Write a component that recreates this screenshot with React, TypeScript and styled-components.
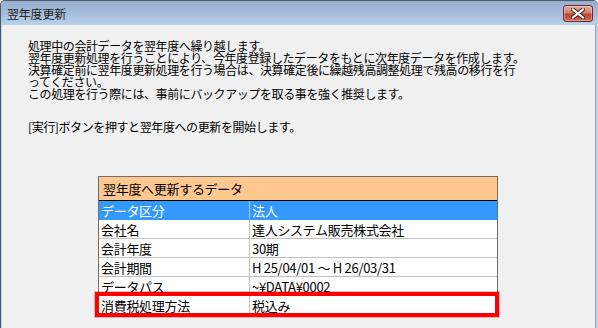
import React from 'react'
import styled, { createGlobalStyle } from 'styled-components'

const GlobalStyle = createGlobalStyle`
  html, body {
    margin: 0;
    padding: 0;
    background: #f0f0f0;
  }
  body {
    font-family: 'Noto Sans CJK JP', 'Noto Sans', sans-serif;
  }
`

const Window = styled.div`
  width: 598px;
  height: 328px;
  display: flex;
  flex-direction: column;
  overflow: hidden;
  border-top: 1px solid #505a66;
  border-left: 1px solid #505a66;
  border-radius: 5px 5px 0 0;
  box-sizing: border-box;
  background: #b9d1ea;
`

const TitleBar = styled.div`
  height: 24px;
  flex: none;
  display: flex;
  align-items: center;
  justify-content: space-between;
  padding: 0 5px 0 6px;
  background: linear-gradient(#95aecd, #a9c1de 60%, #bad1ea);
`

const Title = styled.span`
  font-size: 12px;
  color: #1a1a1a;
  letter-spacing: -0.2px;
`

const CloseButton = styled.div`
  width: 30px;
  height: 17px;
  margin-top: 1px;
  box-sizing: border-box;
  border: 1px solid #6f2a22;
  border-radius: 3px;
  background: linear-gradient(#e3a99c, #d4806f 45%, #c0412c 55%, #cc6a55);
  display: flex;
  align-items: center;
  justify-content: center;
  box-shadow: inset 0 0 0 1px rgba(255, 255, 255, 0.35);
`

const Body = styled.div`
  flex: 1;
  margin-left: 1px;
  margin-right: 2px;
  border-right: 1px solid #8fa5be;
  background: #f0f0f0;
  padding: 15px 0 0 26px;
`

const Message = styled.div`
  font-size: 12px;
  line-height: 12px;
  color: #000;
  letter-spacing: -0.4px;
  white-space: nowrap;
`

const Notice = styled(Message)`
  margin-top: 21px;
`

const Table = styled.div`
  margin: 43px 0 0 70px;
  width: 400px;
  box-sizing: border-box;
  border: 1px solid #6e6e6e;
  border-bottom: none;
  font-size: 13px;
  letter-spacing: -0.3px;
  color: #000;
`

const Header = styled.div`
  height: 23px;
  display: flex;
  align-items: center;
  padding-left: 4px;
  background: #ffc88e;
  border-bottom: 1px solid #000;
`

const Row = styled.div<{ $selected?: boolean; $highlight?: boolean }>`
  display: grid;
  grid-template-columns: 151px 1fr;
  height: 19px;
  box-sizing: border-box;
  position: relative;
  background: ${(p) => (p.$selected ? '#3399ff' : '#fff')};
  color: ${(p) => (p.$selected ? '#fff' : '#000')};
  border-bottom: 1px solid ${(p) => (p.$selected ? '#3399ff' : '#c0c0c0')};

  ${(p) =>
    p.$highlight &&
    `
    &::after {
      content: '';
      position: absolute;
      top: -4px;
      left: -4px;
      right: -2px;
      bottom: -3px;
      border: 4px solid #ff0000;
      box-shadow: 0 0 0 1px rgba(200, 0, 0, 0.25);
    }
  `}
`

const Cell = styled.div<{ $first?: boolean }>`
  display: flex;
  align-items: center;
  padding-left: 2px;
  border-right: ${(p) => (p.$first ? '1px solid #c0c0c0' : 'none')};
  white-space: nowrap;
  overflow: hidden;
`

const rows = [
  ['会社名', '達人システム販売株式会社'],
  ['会計年度', '30期'],
  ['会計期間', 'H 25/04/01 〜 H 26/03/31'],
  ['データパス', '~¥DATA¥0002'],
]

export default function App() {
  return (
    <>
      <GlobalStyle />
      <Window>
        <TitleBar>
          <Title>翌年度更新</Title>
          <CloseButton>
            <svg width="14" height="11" viewBox="0 0 14 11">
              <path
                d="M2 1.5 L12 9.5 M12 1.5 L2 9.5"
                stroke="#3a1a16"
                strokeWidth="4"
                strokeLinecap="square"
              />
              <path
                d="M2 1.5 L12 9.5 M12 1.5 L2 9.5"
                stroke="#fff"
                strokeWidth="2.2"
                strokeLinecap="square"
              />
            </svg>
          </CloseButton>
        </TitleBar>
        <Body>
          <Message>
            <div>処理中の会計データを翌年度へ繰り越します。</div>
            <div>翌年度更新処理を行うことにより、今年度登録したデータをもとに次年度データを作成します。</div>
            <div>決算確定前に翌年度更新処理を行う場合は、決算確定後に繰越残高調整処理で残高の移行を行</div>
            <div>ってください。</div>
            <div>この処理を行う際には、事前にバックアップを取る事を強く推奨します。</div>
          </Message>
          <Notice>[実行]ボタンを押すと翌年度への更新を開始します。</Notice>
          <Table>
            <Header>翌年度へ更新するデータ</Header>
            <Row $selected>
              <Cell $first>データ区分</Cell>
              <Cell>法人</Cell>
            </Row>
            {rows.map(([k, v]) => (
              <Row key={k}>
                <Cell $first>{k}</Cell>
                <Cell>{v}</Cell>
              </Row>
            ))}
            <Row $highlight>
              <Cell $first>消費税処理方法</Cell>
              <Cell>税込み</Cell>
            </Row>
          </Table>
        </Body>
      </Window>
    </>
  )
}
